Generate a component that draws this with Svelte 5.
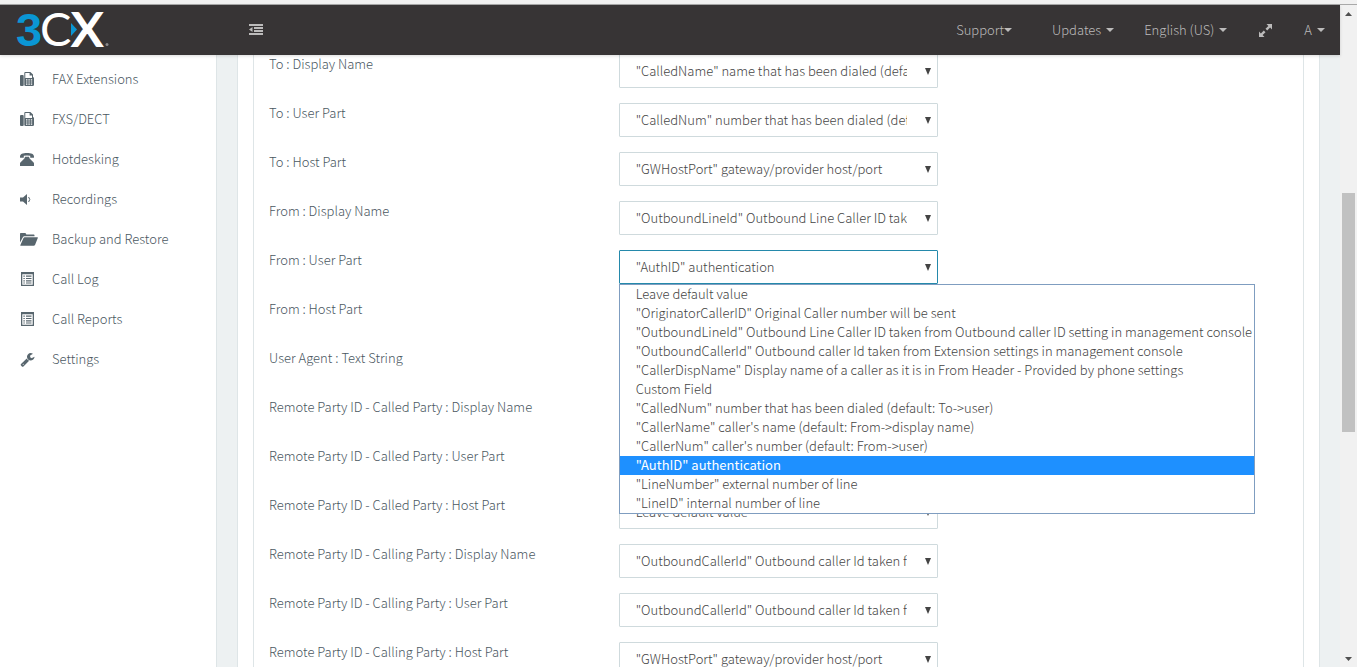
<script>
  const nav = [
    { label: 'FAX Extensions', icon: 'fax' },
    { label: 'FXS/DECT', icon: 'fax' },
    { label: 'Hotdesking', icon: 'phone' },
    { label: 'Recordings', icon: 'volume' },
    { label: 'Backup and Restore', icon: 'folder' },
    { label: 'Call Log', icon: 'list' },
    { label: 'Call Reports', icon: 'list' },
    { label: 'Settings', icon: 'wrench' }
  ];

  const calledName = '"CalledName" name that has been dialed (default: To->display name)';
  const gwHost = '"GWHostPort" gateway/provider host/port';
  const options = [
    'Leave default value',
    '"OriginatorCallerID" Original Caller number will be sent',
    '"OutboundLineId" Outbound Line Caller ID taken from Outbound caller ID setting in management console',
    '"OutboundCallerId" Outbound caller Id taken from Extension settings in management console',
    '"CallerDispName" Display name of a caller as it is in From Header - Provided by phone settings',
    'Custom Field',
    '"CalledNum" number that has been dialed (default: To->user)',
    '"CallerName" caller\'s name (default: From->display name)',
    '"CallerNum" caller\'s number (default: From->user)',
    '"AuthID" authentication',
    '"LineNumber" external number of line',
    '"LineID" internal number of line'
  ];
  const allOptions = [...options, calledName, gwHost];

  let fields = $state([
    { label: 'To : Display Name', value: calledName },
    { label: 'To : User Part', value: options[6] },
    { label: 'To : Host Part', value: gwHost },
    { label: 'From : Display Name', value: options[2] },
    { label: 'From : User Part', value: options[9] },
    { label: 'From : Host Part', value: gwHost },
    { label: 'User Agent : Text String', value: options[0] },
    { label: 'Remote Party ID - Called Party : Display Name', value: options[0] },
    { label: 'Remote Party ID - Called Party : User Part', value: options[0] },
    { label: 'Remote Party ID - Called Party : Host Part', value: options[0] },
    { label: 'Remote Party ID - Calling Party : Display Name', value: options[3] },
    { label: 'Remote Party ID - Calling Party : User Part', value: options[3] },
    { label: 'Remote Party ID - Calling Party : Host Part', value: gwHost }
  ]);
  let open = $state(4);

  function choose(i, option) {
    fields[i].value = option;
    open = -1;
  }
</script>

{#snippet caret()}
  <svg class="caret" width="8" height="4" viewBox="0 0 8 4" aria-hidden="true"><path d="M0 0h8L4 4z" /></svg>
{/snippet}

{#snippet icon(name)}
  {#if name === 'fax'}
    <svg width="14" height="14" viewBox="0 0 14 14">
      <path fill-rule="evenodd" d="M1 3h1.800q.9 0 .9 1v9q0 1-.9 1H1q-1 0-1-1V4q0-1 1-1zM4.300 1q0-1 1-1H10.400L13 2.600V5q1 .3 1 1.300V12.700q0 1.300-1.300 1.300H5.600q-1.300 0-1.300-1.300zM5.300 1V6H12V3.500H9.600V1zM6 7.300V8.500H7.400V7.300zM8.400 7.300V8.500H9.800V7.300zM10.800 7.300V8.500H12.200V7.300zM6 9.400V10.600H7.400V9.400zM8.400 9.400V10.600H9.800V9.400zM10.800 9.400V10.600H12.200V9.400zM6 11.500V12.700H7.400V11.500zM8.400 11.500V12.700H9.800V11.500zM10.800 11.500V12.700H12.200V11.500z" />
    </svg>
  {:else if name === 'phone'}
    <svg width="14" height="14" viewBox="0 0 14 14">
      <path d="M0 4.500C0 2 2.800 1 7 1s7 1 7 3.500v.8q0 .5-.5.500H10.800q-.6 0-.6-.6V3.800Q7 3 3.800 3.800v1.400q0 .6-.6.600H.5Q0 5.800 0 5.300zM5 4.800h4l.6 1.700 4 4q.4.5.4 1V14H0v-2.500q0-.5.400-1l4-4z" />
    </svg>
  {:else if name === 'volume'}
    <svg width="14" height="14" viewBox="0 0 14 14">
      <path d="M0 5.500h3l4-3.500v11L3 9.500H0z" />
      <path d="M8.600 5q2.400 2.500 0 5" fill="none" stroke="currentColor" />
    </svg>
  {:else if name === 'folder'}
    <svg width="18" height="14" viewBox="0 0 18 14">
      <path d="M0 10.500V1.800Q0 1 .8 1H5q.8 0 1 .7L6.300 2.500H13.700q.8 0 .8.800V4.200H4.300q-.9 0-1.300.8z" />
      <path d="M4.700 5.200H17.300q.8 0 .5.700L15 13q-.4.800-1.300.8H.9q-.9 0-.5-.8L3.500 6q.4-.8 1.200-.8z" />
    </svg>
  {:else if name === 'list'}
    <svg width="14" height="14" viewBox="0 0 14 14">
      <path fill-rule="evenodd" d="M1 0H14V14H1zM2.300 2.300V12.700H12.700V2.300z" />
      <path d="M3.400 3.600h1.400v1.200H3.400zM6 3.600h5.500v1.200H6zM3.400 5.900h1.400v1.200H3.400zM6 5.900h5.500v1.200H6zM3.400 8.200h1.400v1.200H3.400zM6 8.200h5.500v1.200H6zM3.400 10.400h1.400v1.200H3.400zM6 10.400h5.500v1.200H6z" />
    </svg>
  {:else}
    <svg width="15" height="15" viewBox="0 0 1792 1792">
      <path d="M448 1472q0-26-19-45t-45-19-45 19-19 45 19 45 45 19 45-19 19-45zm644-420l-682 682q-37 37-90 37-52 0-91-37l-106-108q-38-36-38-90 0-53 38-91l681-681q39 98 114.500 173.500t173.500 114.500zm634-435q0 39-23 106-47 134-164.500 217.500t-258.500 83.500q-185 0-316.500-131.500t-131.500-316.500 131.500-316.500 316.500-131.500q58 0 121.500 16.500t107.500 46.500q16 11 16 28t-16 28l-293 169v224l193 107q5-3 79-48.500t135.500-81 70.500-35.500q15 0 23.500 10t8.500 25z" />
    </svg>
  {/if}
{/snippet}

<div class="page">
  <div class="strip"></div>
  <div class="window">
    <div class="app">
      <header>
        <a class="logo" href="#home" aria-label="3CX">
          <svg width="96" height="50" viewBox="0 0 96 50">
            <text x="0" y="41" class="three">3</text>
            <text x="24" y="41" class="cx">C</text>
            <text x="56" y="41" class="cx x">X</text>
            <path class="arrow" d="M55 18l6 6.500-6 6.500z" />
            <circle class="dot" cx="91" cy="39.500" r="1.500" />
          </svg>
        </a>
        <button class="fold" aria-label="Toggle menu">
          <svg width="14" height="12" viewBox="0 0 14 12">
            <path d="M0 0h14v2H0zM5 3h9v2H5zM5 6h9v2H5zM0 9h14v2H0zM0 5.500l3.500-2.500v5z" />
          </svg>
        </button>
        <nav class="top">
          <button class="support">Support{@render caret()}</button>
          <button>Updates {@render caret()}</button>
          <button>English (US) {@render caret()}</button>
          <button class="expand" aria-label="Full screen">
            <svg width="13" height="13" viewBox="0 0 13 13">
              <path d="M7.500 0H13v5.500l-1.900-1.900-2.900 2.900-1.700-1.700 2.900-2.900zM5.500 13H0V7.500l1.900 1.900 2.900-2.900 1.700 1.700-2.900 2.900z" />
            </svg>
          </button>
          <button>A {@render caret()}</button>
        </nav>
      </header>

      <div class="body">
        <aside>
          <nav>
            {#each nav as item}
              <a href="#{item.icon}"><span class="icon">{@render icon(item.icon)}</span>{item.label}</a>
            {/each}
          </nav>
        </aside>
        <main>
          <section class="panel">
            <form>
              {#each fields as field, i}
                <div class="row">
                  <label for="field-{i}">{field.label}</label>
                  <div class="control" class:open={open === i}>
                    <select id="field-{i}" bind:value={field.value}>
                      {#each allOptions as option}
                        <option value={option}>{option}</option>
                      {/each}
                    </select>
                    <svg class="arrow" width="6" height="7" viewBox="0 0 6 7" aria-hidden="true"><path d="M0 0h6L3 7z" /></svg>
                    {#if open === i}
                      <div class="menu" role="listbox" aria-label={field.label}>
                        {#each options as option}
                          <button
                            type="button"
                            role="option"
                            aria-selected={option === field.value}
                            onclick={() => choose(i, option)}>{option}</button>
                        {/each}
                      </div>
                    {/if}
                  </div>
                </div>
              {/each}
            </form>
          </section>
        </main>
      </div>
    </div>

    <div class="scrollbar" aria-hidden="true">
      <svg width="17" height="17" viewBox="0 0 17 17"><path d="M5 11h7L8.500 7z" /></svg>
      <div class="track">
        <div class="before"></div>
        <div class="thumb"></div>
        <div class="after"></div>
      </div>
      <svg width="17" height="17" viewBox="0 0 17 17"><path d="M5 7h7L8.500 11z" /></svg>
    </div>
  </div>
</div>

<style>
  :global(body) {
    margin: 0;
    overflow: hidden;
  }

  .page {
    display: flex;
    flex-direction: column;
    height: 100vh;
    color: #4a575f;
    font: 300 13px/20px 'Noto Sans CJK SC', 'Noto Sans', sans-serif;
  }

  .page * {
    box-sizing: border-box;
  }

  button,
  select {
    font: inherit;
    color: inherit;
    border: 0;
    background: none;
  }

  svg {
    display: block;
    fill: currentColor;
  }

  .strip {
    flex: none;
    height: 5px;
    background: #f1f1f1;
    border-bottom: 1px solid #a9a9a9;
  }

  .window {
    display: flex;
    flex: 1;
    min-height: 0;
  }

  .app {
    display: flex;
    flex-direction: column;
    flex: 1;
    min-width: 0;
    background: #edf1f2;
  }

  header {
    position: relative;
    z-index: 2;
    display: flex;
    flex: none;
    align-items: center;
    height: 50px;
    background: #373435;
    color: #bcbbbb;
    box-shadow: 0 1px 3px rgba(0, 0, 0, 0.15);
  }

  .logo {
    width: 248px;
    padding-left: 16px;
  }

  .logo svg {
    overflow: visible;
  }

  .three {
    font: bold 47px 'Liberation Sans', sans-serif;
    fill: #0a96d4;
  }

  .cx {
    font: 47px Lato, sans-serif;
    fill: #fff;
  }

  .x {
    stroke: #fff;
    stroke-width: 2;
  }

  .logo .arrow {
    fill: #0a96d4;
  }

  .dot {
    fill: #8a8889;
  }

  .fold {
    padding: 0 1px;
  }

  .top {
    display: flex;
    align-items: center;
    margin-left: auto;
  }

  .top button {
    display: flex;
    align-items: center;
    gap: 5px;
    padding: 0 15px;
  }

  .top .support {
    gap: 0;
    margin-right: 10px;
  }

  .top .expand {
    padding: 0 17px;
  }

  .body {
    display: flex;
    flex: 1;
    min-height: 0;
    overflow: hidden;
  }

  aside {
    flex: none;
    width: 217px;
    padding-top: 4px;
    background: #fff;
    border-right: 1px solid #dee5e7;
  }

  aside a {
    display: flex;
    align-items: center;
    height: 40px;
    padding-left: 20px;
    color: inherit;
    text-decoration: none;
  }

  .icon {
    width: 32px;
    color: #58666e;
  }

  main {
    flex: 1;
    min-width: 0;
    padding: 0 20px;
  }

  .panel {
    padding: 0 15px;
    background: #fff;
    border: solid #dee5e7;
    border-width: 0 1px;
  }

  form {
    border: solid #dee5e7;
    border-width: 0 1px;
  }

  .row {
    display: grid;
    grid-template-columns: repeat(3, 1fr);
    margin-bottom: 15px;
  }

  .row:first-child {
    margin-top: -1px;
  }

  label {
    padding-left: 15px;
    white-space: nowrap;
  }

  .control {
    position: relative;
    margin: 0 15px;
  }

  select {
    display: block;
    width: 100%;
    height: 34px;
    padding: 0 30px 0 16px;
    appearance: none;
    color: #444;
    background: #fff;
    border: 1px solid #cfdadd;
    border-radius: 1px;
    outline: none;
  }

  .open select {
    border-color: #2489ab;
  }

  .control .arrow {
    position: absolute;
    top: 14px;
    right: 7px;
    color: #444;
    pointer-events: none;
  }

  .menu {
    position: absolute;
    z-index: 1;
    top: 100%;
    left: 0;
    width: max-content;
    color: #444;
    background: #fff;
    border: 1px solid #7f9dc0;
  }

  .menu button {
    display: block;
    width: 100%;
    height: 19px;
    padding: 0 2px 1px 16px;
    line-height: 18px;
    text-align: left;
    white-space: nowrap;
  }

  .menu button[aria-selected='true'] {
    color: #fff;
    font-weight: 400;
    background: #1e90ff;
  }

  .scrollbar {
    display: flex;
    flex: none;
    flex-direction: column;
    width: 17px;
    color: #505050;
    background: #f1f1f1;
  }

  .track {
    display: flex;
    flex: 1;
    flex-direction: column;
    padding: 0 2px;
  }

  .before {
    flex: 171;
  }

  .thumb {
    flex: 239;
    background: #c1c1c1;
  }

  .after {
    flex: 218;
  }
</style>
